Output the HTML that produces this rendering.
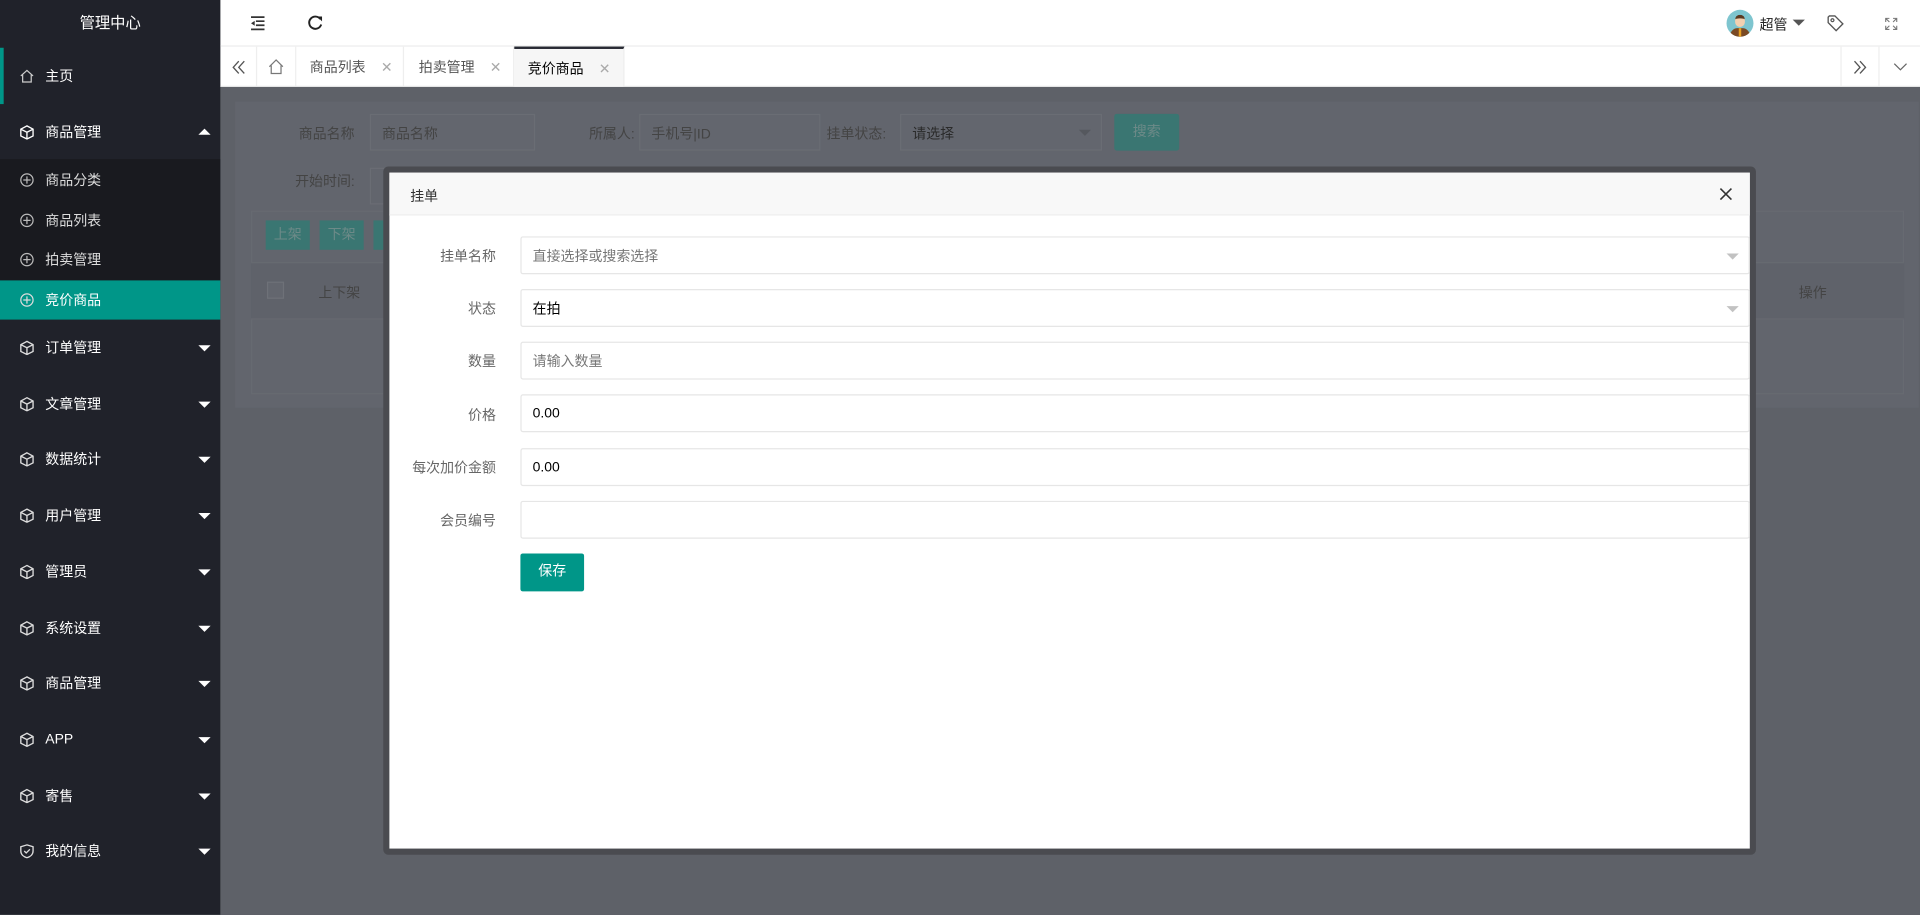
<!DOCTYPE html>
<html><head><meta charset="utf-8"><style>
*{margin:0;padding:0;box-sizing:border-box}
html,body{width:1920px;height:915px;overflow:hidden;background:#5e6168}
#s{position:absolute;left:0;top:0;width:1568px;height:747px;transform:scale(1.22449);transform-origin:0 0;font-family:"Liberation Sans","Noto Sans CJK SC",sans-serif;font-size:11.4px;color:#333}
.a{position:absolute}
.side{left:0;top:0;width:180px;height:747px;background:#20222a}
.mi{position:absolute;left:0;width:180px;color:#fff;display:flex;align-items:center}
.mi span.t{position:absolute;left:37px}
.mi svg{position:absolute;left:16px}
.arr{position:absolute;left:162px;width:0;height:0;border-left:5px solid transparent;border-right:5px solid transparent;border-top:5px solid #fff}
.tab{position:absolute;top:38px;height:33px;border-right:1px solid #eee;display:flex;align-items:center;color:#555}
.inp{position:absolute;height:31px;background:#fff;border:1px solid #e6e6e6;border-radius:2px;display:flex;align-items:center;padding-left:9px}
.lbl{position:absolute;width:90px;text-align:right;color:#666}
</style></head><body><div id="s">
<div class="a side"></div>
<div class="a" style="left:0;top:0;width:180px;height:38px;line-height:38px;text-align:center;color:#fff;font-size:12.5px">管理中心</div>
<div class="a" style="left:0;top:39px;width:3px;height:46px;background:#009688"></div>
<div class="mi" style="top:52px;height:20px"><svg width="12" height="12" viewBox="0 0 12 12"><path d="M1 6 6 1.5 11 6M2.5 5v6h7V5" fill="none" stroke="#ccc" stroke-width="1"/></svg><span class="t">主页</span></div>
<div class="mi" style="top:98px;height:20px"><svg width="12" height="12" viewBox="0 0 12 12"><path d="M6 .8 11 3.5v5.5L6 11.5 1 9V3.5zM1 3.5 6 6l5-2.5M6 6v5.5" fill="none" stroke="#fff" stroke-width="1.1"/></svg><span class="t">商品管理</span><div style="position:absolute;left:162px;top:7px;border-left:5px solid transparent;border-right:5px solid transparent;border-bottom:5px solid #fff"></div></div>
<div class="a" style="left:0;top:130px;width:180px;height:131px;background:#191a1f"></div>
<div class="a" style="left:0;top:229px;width:180px;height:32px;background:#009688"></div>
<div class="mi" style="top:137px;height:20px;color:#ddd"><svg width="12" height="12" viewBox="0 0 12 12"><circle cx="6" cy="6" r="5" fill="none" stroke="#bbb"/><path d="M6 3v6M3 6h6" stroke="#bbb"/></svg><span class="t">商品分类</span></div>
<div class="mi" style="top:170px;height:20px;color:#ddd"><svg width="12" height="12" viewBox="0 0 12 12"><circle cx="6" cy="6" r="5" fill="none" stroke="#bbb"/><path d="M6 3v6M3 6h6" stroke="#bbb"/></svg><span class="t">商品列表</span></div>
<div class="mi" style="top:202px;height:20px;color:#ddd"><svg width="12" height="12" viewBox="0 0 12 12"><circle cx="6" cy="6" r="5" fill="none" stroke="#bbb"/><path d="M6 3v6M3 6h6" stroke="#bbb"/></svg><span class="t">拍卖管理</span></div>
<div class="mi" style="top:235px;height:20px"><svg width="12" height="12" viewBox="0 0 12 12"><circle cx="6" cy="6" r="5" fill="none" stroke="#ddd"/><path d="M6 3v6M3 6h6" stroke="#ddd"/></svg><span class="t">竞价商品</span></div>
<div class="mi" style="top:274px;height:20px"><svg width="12" height="12" viewBox="0 0 12 12"><path d="M6 .8 11 3.5v5.5L6 11.5 1 9V3.5zM1 3.5 6 6l5-2.5M6 6v5.5" fill="none" stroke="#ddd" stroke-width="1.1"/></svg><span class="t">订单管理</span><div class="arr" style="top:8px"></div></div>
<div class="mi" style="top:320px;height:20px"><svg width="12" height="12" viewBox="0 0 12 12"><path d="M6 .8 11 3.5v5.5L6 11.5 1 9V3.5zM1 3.5 6 6l5-2.5M6 6v5.5" fill="none" stroke="#ddd" stroke-width="1.1"/></svg><span class="t">文章管理</span><div class="arr" style="top:8px"></div></div>
<div class="mi" style="top:365px;height:20px"><svg width="12" height="12" viewBox="0 0 12 12"><path d="M6 .8 11 3.5v5.5L6 11.5 1 9V3.5zM1 3.5 6 6l5-2.5M6 6v5.5" fill="none" stroke="#ddd" stroke-width="1.1"/></svg><span class="t">数据统计</span><div class="arr" style="top:8px"></div></div>
<div class="mi" style="top:411px;height:20px"><svg width="12" height="12" viewBox="0 0 12 12"><path d="M6 .8 11 3.5v5.5L6 11.5 1 9V3.5zM1 3.5 6 6l5-2.5M6 6v5.5" fill="none" stroke="#ddd" stroke-width="1.1"/></svg><span class="t">用户管理</span><div class="arr" style="top:8px"></div></div>
<div class="mi" style="top:457px;height:20px"><svg width="12" height="12" viewBox="0 0 12 12"><path d="M6 .8 11 3.5v5.5L6 11.5 1 9V3.5zM1 3.5 6 6l5-2.5M6 6v5.5" fill="none" stroke="#ddd" stroke-width="1.1"/></svg><span class="t">管理员</span><div class="arr" style="top:8px"></div></div>
<div class="mi" style="top:503px;height:20px"><svg width="12" height="12" viewBox="0 0 12 12"><path d="M6 .8 11 3.5v5.5L6 11.5 1 9V3.5zM1 3.5 6 6l5-2.5M6 6v5.5" fill="none" stroke="#ddd" stroke-width="1.1"/></svg><span class="t">系统设置</span><div class="arr" style="top:8px"></div></div>
<div class="mi" style="top:548px;height:20px"><svg width="12" height="12" viewBox="0 0 12 12"><path d="M6 .8 11 3.5v5.5L6 11.5 1 9V3.5zM1 3.5 6 6l5-2.5M6 6v5.5" fill="none" stroke="#ddd" stroke-width="1.1"/></svg><span class="t">商品管理</span><div class="arr" style="top:8px"></div></div>
<div class="mi" style="top:594px;height:20px"><svg width="12" height="12" viewBox="0 0 12 12"><path d="M6 .8 11 3.5v5.5L6 11.5 1 9V3.5zM1 3.5 6 6l5-2.5M6 6v5.5" fill="none" stroke="#ddd" stroke-width="1.1"/></svg><span class="t">APP</span><div class="arr" style="top:8px"></div></div>
<div class="mi" style="top:640px;height:20px"><svg width="12" height="12" viewBox="0 0 12 12"><path d="M6 .8 11 3.5v5.5L6 11.5 1 9V3.5zM1 3.5 6 6l5-2.5M6 6v5.5" fill="none" stroke="#ddd" stroke-width="1.1"/></svg><span class="t">寄售</span><div class="arr" style="top:8px"></div></div>
<div class="mi" style="top:685px;height:20px"><svg width="12" height="12" viewBox="0 0 12 12"><path d="M6 1 11 2.5V6c0 3-2.5 4.8-5 5.5C3.5 10.8 1 9 1 6V2.5zM3.8 6l1.6 1.6L8.4 4.6" fill="none" stroke="#ddd" stroke-width="1.1"/></svg><span class="t">我的信息</span><div class="arr" style="top:8px"></div></div>

<div class="a" style="left:180px;top:0;width:1388px;height:38px;background:#fff;border-bottom:1px solid #f0f0f0"></div>
<svg class="a" style="left:204px;top:13px" width="13" height="12" viewBox="0 0 13 12"><path d="M1 1h11M5 4.3h7M5 7.6h7M1 11h11" stroke="#333" stroke-width="1.4"/><path d="M4 4 1 6l3 2z" fill="#333"/></svg>
<svg class="a" style="left:251px;top:12px" width="13" height="13" viewBox="0 0 13 13"><path d="M10.5 3.5A5 5 0 1 0 11.3 8" fill="none" stroke="#222" stroke-width="1.6"/><path d="M8 1.5h4v4z" fill="#222"/></svg>
<div class="a" style="left:1410px;top:8px;width:22px;height:22px;border-radius:50%;background:#7ec5cf;overflow:hidden"><div style="position:absolute;left:7px;top:4px;width:8px;height:10px;border-radius:4px;background:#f3d0b0;border-top:3px solid #5a3a22"></div><div style="position:absolute;left:3px;top:15px;width:16px;height:8px;border-radius:6px 6px 0 0;background:#7a4a25"></div><div style="position:absolute;left:10px;top:15px;width:2px;height:7px;background:#e8a020"></div></div>
<div class="a" style="left:1437px;top:12px;color:#222;font-size:11.4px">超管</div>
<div class="a" style="left:1464px;top:16px;border-left:5px solid transparent;border-right:5px solid transparent;border-top:5px solid #555"></div>
<svg class="a" style="left:1492px;top:12px" width="14" height="14" viewBox="0 0 14 14"><path d="M1 2v4.5L7.5 13 13 7.5 6.5 1H2z" fill="none" stroke="#555" stroke-width="1.1"/><circle cx="4.5" cy="4.5" r="1.2" fill="none" stroke="#555"/></svg>
<svg class="a" style="left:1539px;top:14px" width="11" height="11" viewBox="0 0 11 11"><path d="M1 4V1h3M7 1h3v3M10 7v3H7M4 10H1V7M1 1l3 3M10 1 7 4M10 10 7 7M1 10l3-3" fill="none" stroke="#777" stroke-width=".9"/></svg>

<div class="a" style="left:180px;top:38px;width:1388px;height:33px;background:#fff;border-bottom:1px solid #eee"></div>
<div class="tab" style="left:180px;width:30px;justify-content:center"><svg width="12" height="12" viewBox="0 0 12 12"><path d="M6 1 1.5 6 6 11M10.5 1 6 6l4.5 5" fill="none" stroke="#555" stroke-width="1.1"/></svg></div>
<div class="tab" style="left:210px;width:32px;justify-content:center"><svg width="13" height="13" viewBox="0 0 13 13"><path d="M1 6.5 6.5 1 12 6.5M2.5 5.5V12h8V5.5" fill="none" stroke="#777"/></svg></div>
<div class="tab" style="left:242px;width:88px;padding-left:11px">商品列表<span style="position:absolute;left:69px;color:#aaa">✕</span></div>
<div class="tab" style="left:330px;width:90px;padding-left:12px">拍卖管理<span style="position:absolute;left:70px;color:#aaa">✕</span></div>
<div class="tab" style="left:420px;width:90px;padding-left:11px;background:#f6f6f6;color:#000;border-top:2px solid #292b34">竞价商品<span style="position:absolute;left:69px;color:#aaa">✕</span></div>
<div class="tab" style="left:1503px;width:32px;justify-content:center;border-left:1px solid #eee"><svg width="12" height="12" viewBox="0 0 12 12"><path d="M1.5 1 6 6l-4.5 5M6 1l4.5 5L6 11" fill="none" stroke="#555" stroke-width="1.1"/></svg></div>
<div class="tab" style="left:1535px;width:33px;justify-content:center;border-right:none"><svg width="12" height="7" viewBox="0 0 12 7"><path d="M1 1l5 5 5-5" fill="none" stroke="#666"/></svg></div>

<div class="a" style="left:180px;top:71px;width:1388px;height:676px;background:#5e6168"></div>
<div class="a" style="left:192px;top:83px;width:1375px;height:250px;background:#62656d"></div>
<div class="a" style="left:244px;top:101px;color:#444">商品名称</div>
<div class="a" style="left:302px;top:93px;width:135px;height:30px;border:1px solid #6a6d74;background:#63666e;color:#444;padding:7px 9px">商品名称</div>
<div class="a" style="left:481px;top:101px;color:#444">所属人:</div>
<div class="a" style="left:522px;top:93px;width:148px;height:30px;border:1px solid #6a6d74;background:#63666e;color:#444;padding:7px 9px">手机号|ID</div>
<div class="a" style="left:675px;top:101px;color:#444">挂单状态:</div>
<div class="a" style="left:735px;top:93px;width:165px;height:30px;border:1px solid #6a6d74;background:#63666e;color:#2a2a2a;padding:7px 9px">请选择<div style="position:absolute;right:8px;top:12px;border-left:5px solid transparent;border-right:5px solid transparent;border-top:5px solid #55585e"></div></div>
<div class="a" style="left:910px;top:93px;width:53px;height:30px;background:#3a7672;color:#6d8a88;text-align:center;line-height:30px;border-radius:2px">搜索</div>
<div class="a" style="left:241px;top:140px;color:#444">开始时间:</div>
<div class="a" style="left:302px;top:137px;width:135px;height:30px;border:1px solid #6a6d74"></div>
<div class="a" style="left:440px;top:137px;width:130px;height:30px;border:1px solid #6a6d74"></div>
<div class="a" style="left:205px;top:172px;width:1350px;height:150px;border:1px solid #676a71;background:#62656d"></div>
<div class="a" style="left:217px;top:180px;width:36px;height:24px;background:#3a7672;color:#6d8a88;text-align:center;line-height:24px">上架</div>
<div class="a" style="left:261px;top:180px;width:36px;height:24px;background:#3a7672;color:#6d8a88;text-align:center;line-height:24px">下架</div>
<div class="a" style="left:305px;top:180px;width:20px;height:24px;background:#3a7672"></div>
<div class="a" style="left:205px;top:214px;width:1350px;height:47px;border-top:1px solid #676a71;border-bottom:1px solid #676a71;background:#5f626a"></div>
<div class="a" style="left:218px;top:230px;width:14px;height:14px;border:1px solid #6e7178;background:#63666e"></div>
<div class="a" style="left:260px;top:231px;color:#444">上下架</div>
<div class="a" style="left:1469px;top:231px;color:#444">操作</div>

<div class="a" style="left:313px;top:136px;width:1121px;height:562px;background:#4a4b50;border-radius:4px"></div>
<div class="a" style="left:318px;top:141px;width:1111px;height:552px;background:#fff"></div>
<div class="a" style="left:318px;top:141px;width:1111px;height:35px;background:#f8f8f8;border-bottom:1px solid #eee"></div>
<div class="a" style="left:335px;top:152px;color:#333">挂单</div>
<svg class="a" style="left:1404px;top:153px" width="11" height="11" viewBox="0 0 11 11"><path d="M1 1l9 9M10 1 1 10" stroke="#333" stroke-width="1.3"/></svg>
<div class="lbl" style="left:315px;top:201px">挂单名称</div>
<div class="inp" style="left:425px;top:193px;width:1004px;color:#777">直接选择或搜索选择<div style="position:absolute;right:8px;top:13px;border-left:5px solid transparent;border-right:5px solid transparent;border-top:5px solid #c2c2c2"></div></div>
<div class="lbl" style="left:315px;top:244px">状态</div>
<div class="inp" style="left:425px;top:236px;width:1004px;color:#000">在拍<div style="position:absolute;right:8px;top:13px;border-left:5px solid transparent;border-right:5px solid transparent;border-top:5px solid #c2c2c2"></div></div>
<div class="lbl" style="left:315px;top:287px">数量</div>
<div class="inp" style="left:425px;top:279px;width:1004px;color:#777">请输入数量</div>
<div class="lbl" style="left:315px;top:331px">价格</div>
<div class="inp" style="left:425px;top:322px;width:1004px;color:#000">0.00</div>
<div class="lbl" style="left:315px;top:374px">每次加价金额</div>
<div class="inp" style="left:425px;top:366px;width:1004px;color:#000">0.00</div>
<div class="lbl" style="left:315px;top:417px">会员编号</div>
<div class="inp" style="left:425px;top:409px;width:1004px"></div>
<div class="a" style="left:425px;top:452px;width:52px;height:31px;background:#009688;color:#fff;text-align:center;line-height:31px;border-radius:2px">保存</div>
</div></body></html>
